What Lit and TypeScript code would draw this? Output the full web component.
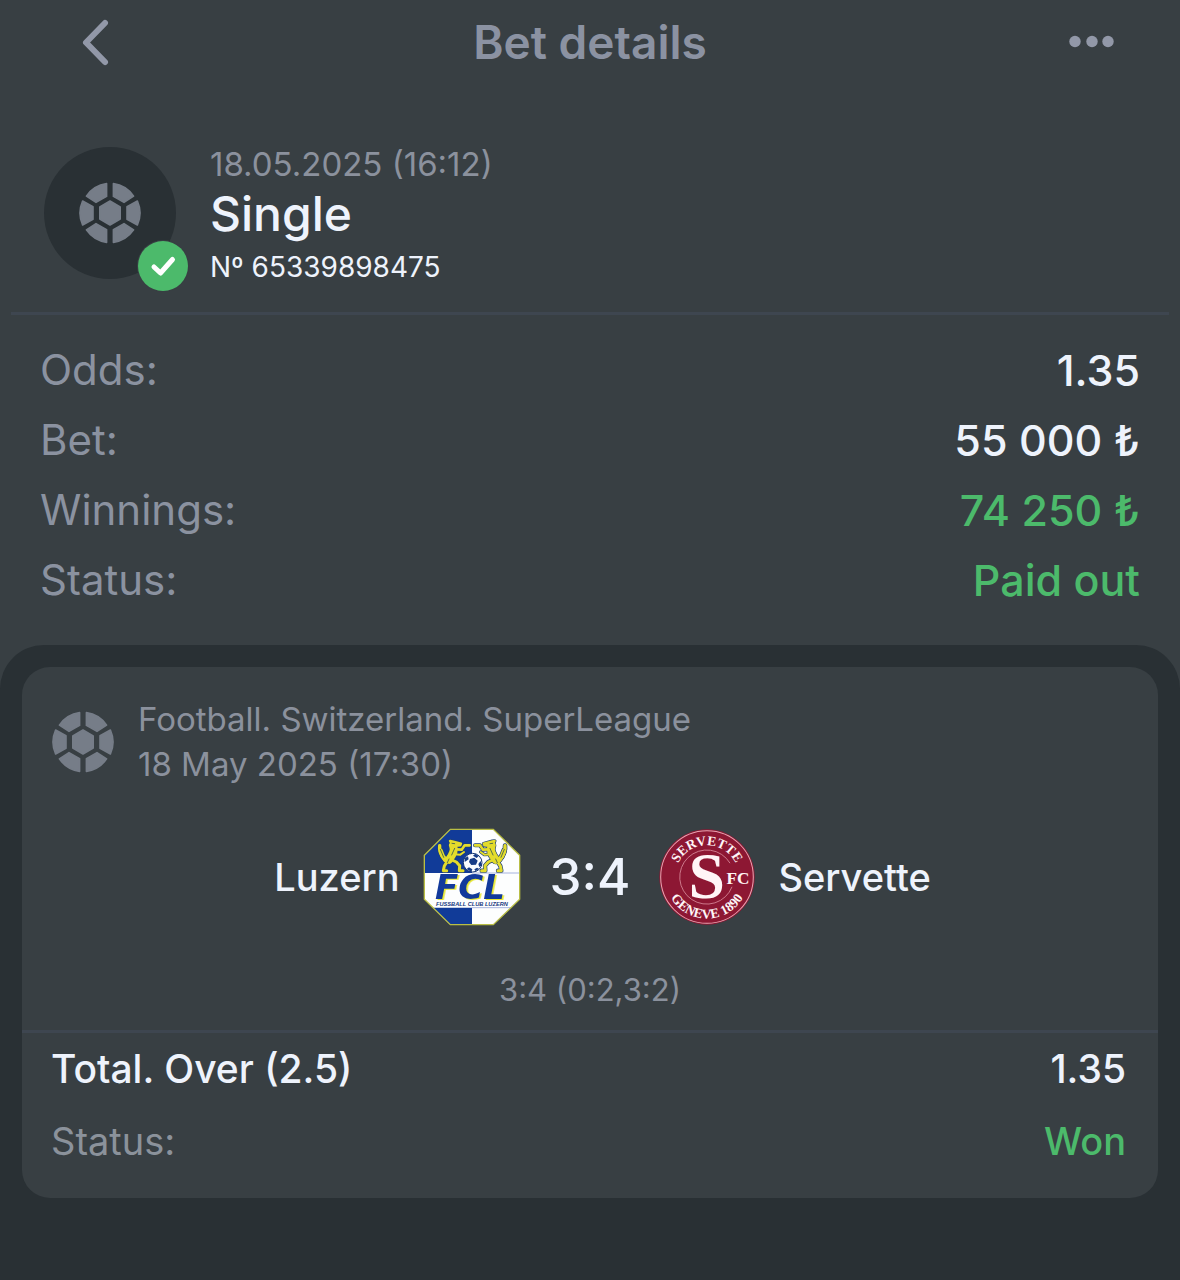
import { LitElement, html, svg, css } from "lit";
import { customElement, property } from "lit/decorators.js";

interface Row {
  label: string;
  value: string;
  won?: boolean;
}

const SUMMARY: Row[] = [
  { label: "Odds:", value: "1.35" },
  { label: "Bet:", value: "55 000 ₺" },
  { label: "Winnings:", value: "74 250 ₺", won: true },
  { label: "Status:", value: "Paid out", won: true },
];

@customElement("ball-icon")
export class BallIcon extends LitElement {
  static styles = css`
    :host {
      display: block;
      flex: none;
      width: 62px;
      height: 62px;
      color: #767d88;
    }
    .ball {
      display: block;
      width: 100%;
      height: 100%;
      fill: currentColor;
      stroke: currentColor;
      stroke-width: 1.6;
      stroke-linejoin: round;
    }
  `;

  render() {
    return html`<svg class="ball" viewBox="-31 -31 62 62" aria-hidden="true">
      <path d="M0-12 10.2-6V6L0 12-10.2 6V-6Z" />
      ${[1, -1].map(
        (x) => svg`<g transform=${`scale(${x} 1)`}>
          <path d="M3.4-29.4V-16.6L14-10.6 23.6-16.9A29.6 29.6 0 0 0 3.4-29.4Z" />
          <path d="M3.4 29.4V16.6L14 10.6 23.6 16.9A29.6 29.6 0 0 1 3.4 29.4Z" />
          <path d="M27.4-12 17-6.3V6.3L27.4 12A29.6 29.6 0 0 0 27.4-12Z" />
        </g>`
      )}
    </svg>`;
  }
}

@customElement("luzern-crest")
export class LuzernCrest extends LitElement {
  static styles = css`
    :host,
    .crest {
      display: block;
      width: 98px;
      height: 98px;
    }
    .name {
      font: italic 700 102px "DejaVu Sans", sans-serif;
      fill: #123a9b;
      filter: drop-shadow(5px 3px 0 #e6e630);
    }
    .club {
      font: italic 700 17px "Liberation Sans", sans-serif;
      fill: #17397f;
    }
    .lion {
      fill: none;
      stroke-linecap: round;
      stroke-linejoin: round;
    }
  `;

  private limbs(color: string, grow: number) {
    return svg`<g stroke=${color}>
      <path d="M90 105C88 119 95 136 106 149" stroke-width=${10 + grow} />
      <path d="M93 120C96 132 101 140 108 148" stroke-width=${13 + grow} />
      <path d="M130 105C136 118 130 132 118 147" stroke-width=${24 + grow} />
      <path d="M114 150 104 166 101 180H111" stroke-width=${9 + grow} />
      <path d="M120 145 140 154 150 165 149 180H160" stroke-width=${9 + grow} />
      <path d="M138 116 156 117 165 104 180 104" stroke-width=${8 + grow} />
      <path d="M133 131 152 132 163 124" stroke-width=${6 + grow} />
      <path d="M121 91 128 92 154 99 152 104 130 106Z" stroke-width=${7 + grow} fill=${color} />
    </g>`;
  }

  private lion() {
    return svg`<g class="lion">
      ${this.limbs("#1d3f78", 4)}
      ${this.limbs("#e3dc2c", 0)}
      <path d="M127 98 135 99M135 113 126 133M118 145 113 156M92 116 102 140" stroke="#56704c" stroke-width="3" />
    </g>`;
  }

  render() {
    return html`<svg class="crest" viewBox="40 52 294 294" role="img" aria-label="FC Luzern">
      <defs>
        <clipPath id="shape"><path d="M122 56H251L330 134V266L251 342H122L44 266V134Z" /></clipPath>
      </defs>
      <g clip-path="url(#shape)">
        <path d="M40 52H334V346H40Z" fill="#fdfefe" />
        <path d="M40 52H187V187H40ZM40 291H187V346H40Z" fill="#113b98" />
        <path d="M187 187H334M187 291H334" stroke="#7d8fce" stroke-width="2" />
      </g>
      ${this.lion()}
      <g transform="translate(376 0) scale(-1 1)">${this.lion()}</g>
      <circle cx="189" cy="156" r="28" fill="#fafcff" stroke="#153571" stroke-width="3" />
      <path d="M181 145L194 141 204 150 199 162 185 163 178 154ZM166 142L175 137 177 146 165 154ZM197 129L207 136 201 142 190 135ZM213 151L217 164 209 169 206 160ZM178 170L188 176 185 184 171 175ZM202 171L208 174 198 182 194 176Z" fill="#173c86" />
      <text class="name" x="76" y="264">FCL</text>
      <text class="club" x="79" y="285">FUSSBALL CLUB LUZERN</text>
      <path d="M122 56H251L330 134V266L251 342H122L44 266V134Z" fill="none" stroke="#b9be45" stroke-width="4" />
    </svg>`;
  }
}

@customElement("servette-crest")
export class ServetteCrest extends LitElement {
  static styles = css`
    :host,
    .crest {
      display: block;
      width: 96px;
      height: 96px;
    }
    text {
      font-family: "Liberation Serif", serif;
      font-weight: 700;
      fill: #fff5f7;
    }
    .ring {
      font-size: 40px;
    }
    .initial {
      font-size: 194px;
    }
    .fc {
      font-size: 51px;
    }
  `;

  render() {
    return html`<svg class="crest" viewBox="49 41 284 284" role="img" aria-label="Servette FC">
      <defs>
        <path id="top" d="M97 183A94 94 0 0 1 285 183" />
        <path id="bottom" d="M68 183A123 123 0 0 0 314 183" />
      </defs>
      <circle cx="191" cy="183" r="141" fill="#8d1733" />
      <circle cx="191" cy="183" r="137" fill="none" stroke="#e9a5b2" stroke-width="3" />
      <path d="M259 142A80 80 0 1 0 265 212" fill="none" stroke="#d8899a" stroke-width="2.5" />
      <text class="ring" text-anchor="middle"><textPath href="#top" startOffset="50%">SERVETTE</textPath></text>
      <text class="ring" text-anchor="middle"><textPath href="#bottom" startOffset="50%">GENEVE 1890</textPath></text>
      <text class="initial" x="136" y="246">S</text>
      <text class="fc" x="249" y="203">FC</text>
    </svg>`;
  }
}

@customElement("detail-rows")
export class DetailRows extends LitElement {
  @property({ attribute: false }) rows: Row[] = [];

  static styles = css`
    :host {
      display: block;
      font-size: 42px;
      line-height: 70px;
      color: #8b92a0;
    }
    .list {
      margin: 0;
    }
    .row {
      display: flex;
      justify-content: space-between;
      gap: 24px;
    }
    .value {
      margin: 0;
      font-size: 43px;
      font-weight: 500;
      color: #eef3fc;
    }
    .won {
      color: #4cba6b;
    }
  `;

  render() {
    return html`<dl class="list">
      ${this.rows.map(
        (r) => html`<div class="row">
          <dt>${r.label}</dt>
          <dd class="value ${r.won ? "won" : ""}">${r.value}</dd>
        </div>`
      )}
    </dl>`;
  }
}

@customElement("app-root")
export class AppRoot extends LitElement {
  static styles = css`
    :host {
      display: flex;
      flex-direction: column;
      min-height: 100vh;
      background: #383f43;
      color: #eef3fc;
      font-family: "Inter", "Liberation Sans", sans-serif;
    }
    h1,
    h2,
    p {
      margin: 0;
    }
    .bar {
      display: grid;
      grid-template-columns: 1fr auto 1fr;
      align-items: center;
      height: 84px;
      padding: 0 60px;
    }
    .icon-button {
      display: flex;
      padding: 0;
      border: 0;
      background: none;
      color: #9298a8;
      cursor: pointer;
    }
    .back {
      justify-self: start;
    }
    .more {
      justify-self: end;
    }
    .title {
      font-size: 46px;
      line-height: 56px;
      font-weight: 600;
      color: #8b92a2;
    }
    .hero {
      display: flex;
      align-items: flex-start;
      gap: 34px;
      margin: 0 11px;
      padding: 63px 33px 25px;
      border-bottom: 3px solid #3e4650;
    }
    .avatar {
      position: relative;
      display: grid;
      place-items: center;
      flex: none;
      width: 132px;
      height: 132px;
      border-radius: 50%;
      background: #293034;
    }
    .badge {
      position: absolute;
      right: -14px;
      bottom: -14px;
      width: 54px;
      height: 54px;
    }
    .date {
      font-size: 33px;
      line-height: 34px;
      color: #8b919d;
    }
    .kind {
      font-size: 48px;
      line-height: 66px;
      font-weight: 500;
    }
    .number {
      font-size: 28px;
      line-height: 40px;
    }
    .summary {
      padding: 20px 40px 30px;
    }
    .panel {
      flex: 1;
      padding: 22px;
      border-radius: 44px 44px 0 0;
      background: #293034;
    }
    .card {
      padding: 30px 0 21px;
      border-radius: 28px;
      background: #383f43;
    }
    .league {
      display: flex;
      align-items: center;
      gap: 24px;
      padding: 0 30px;
      font-size: 33px;
      line-height: 45px;
      color: #8b919d;
    }
    .match {
      display: grid;
      grid-template-columns: 1fr auto 1fr;
      align-items: center;
      gap: 29px;
      margin-top: 41px;
    }
    .team {
      display: flex;
      align-items: center;
      gap: 23px;
      font-size: 38px;
      line-height: 48px;
      font-weight: 500;
    }
    .home {
      justify-content: flex-end;
    }
    .score {
      font-size: 51px;
      line-height: 56px;
      font-weight: 500;
    }
    .periods {
      padding: 44px 0 20px;
      border-bottom: 3px solid #3e4650;
      font-size: 31px;
      line-height: 40px;
      text-align: center;
      color: #8b919d;
    }
    .outcome {
      display: flex;
      justify-content: space-between;
      padding: 0 32px 0 29px;
      font-size: 39px;
      line-height: 72px;
      font-weight: 500;
    }
    .status {
      font-size: 38px;
    }
    .muted {
      font-weight: 400;
      color: #8b929b;
    }
    .won {
      color: #4cba6b;
    }
  `;

  render() {
    return html`
      <header class="bar">
        <button class="icon-button back" aria-label="Back">
          <svg width="56" height="50" viewBox="0 0 56 50" fill="none" stroke="currentColor" stroke-width="6" stroke-linecap="round" stroke-linejoin="round">
            <path d="M45 6 26 25.500 45 45" />
          </svg>
        </button>
        <h1 class="title">Bet details</h1>
        <button class="icon-button more" aria-label="More options">
          <svg width="56" height="24" viewBox="0 0 56 24" fill="currentColor">
            <circle cx="11" cy="11.500" r="5.700" />
            <circle cx="28" cy="11.500" r="5.700" />
            <circle cx="44" cy="11.500" r="5.700" />
          </svg>
        </button>
      </header>

      <section class="hero">
        <div class="avatar">
          <ball-icon></ball-icon>
          <svg class="badge" viewBox="0 0 54 54" role="img" aria-label="Won">
            <circle cx="27" cy="27" r="26" fill="#383f43" />
            <circle cx="27" cy="27" r="25" fill="#4cba6b" />
            <path d="M18 28 24.500 34 36.500 20.500" fill="none" stroke="#fff" stroke-width="5" stroke-linecap="round" stroke-linejoin="round" />
          </svg>
        </div>
        <div>
          <p class="date">18.05.2025 (16:12)</p>
          <h2 class="kind">Single</h2>
          <p class="number">Nº 65339898475</p>
        </div>
      </section>

      <detail-rows class="summary" .rows=${SUMMARY}></detail-rows>

      <main class="panel">
        <article class="card">
          <div class="league">
            <ball-icon></ball-icon>
            <div>
              <p>Football. Switzerland. SuperLeague</p>
              <p>18 May 2025 (17:30)</p>
            </div>
          </div>
          <div class="match">
            <div class="team home"><span>Luzern</span><luzern-crest></luzern-crest></div>
            <div class="score">3:4</div>
            <div class="team"><servette-crest></servette-crest><span>Servette</span></div>
          </div>
          <p class="periods">3:4 (0:2,3:2)</p>
          <div class="outcome"><span>Total. Over (2.5)</span><span>1.35</span></div>
          <div class="outcome status"><span class="muted">Status:</span><span class="won">Won</span></div>
        </article>
      </main>
    `;
  }
}
